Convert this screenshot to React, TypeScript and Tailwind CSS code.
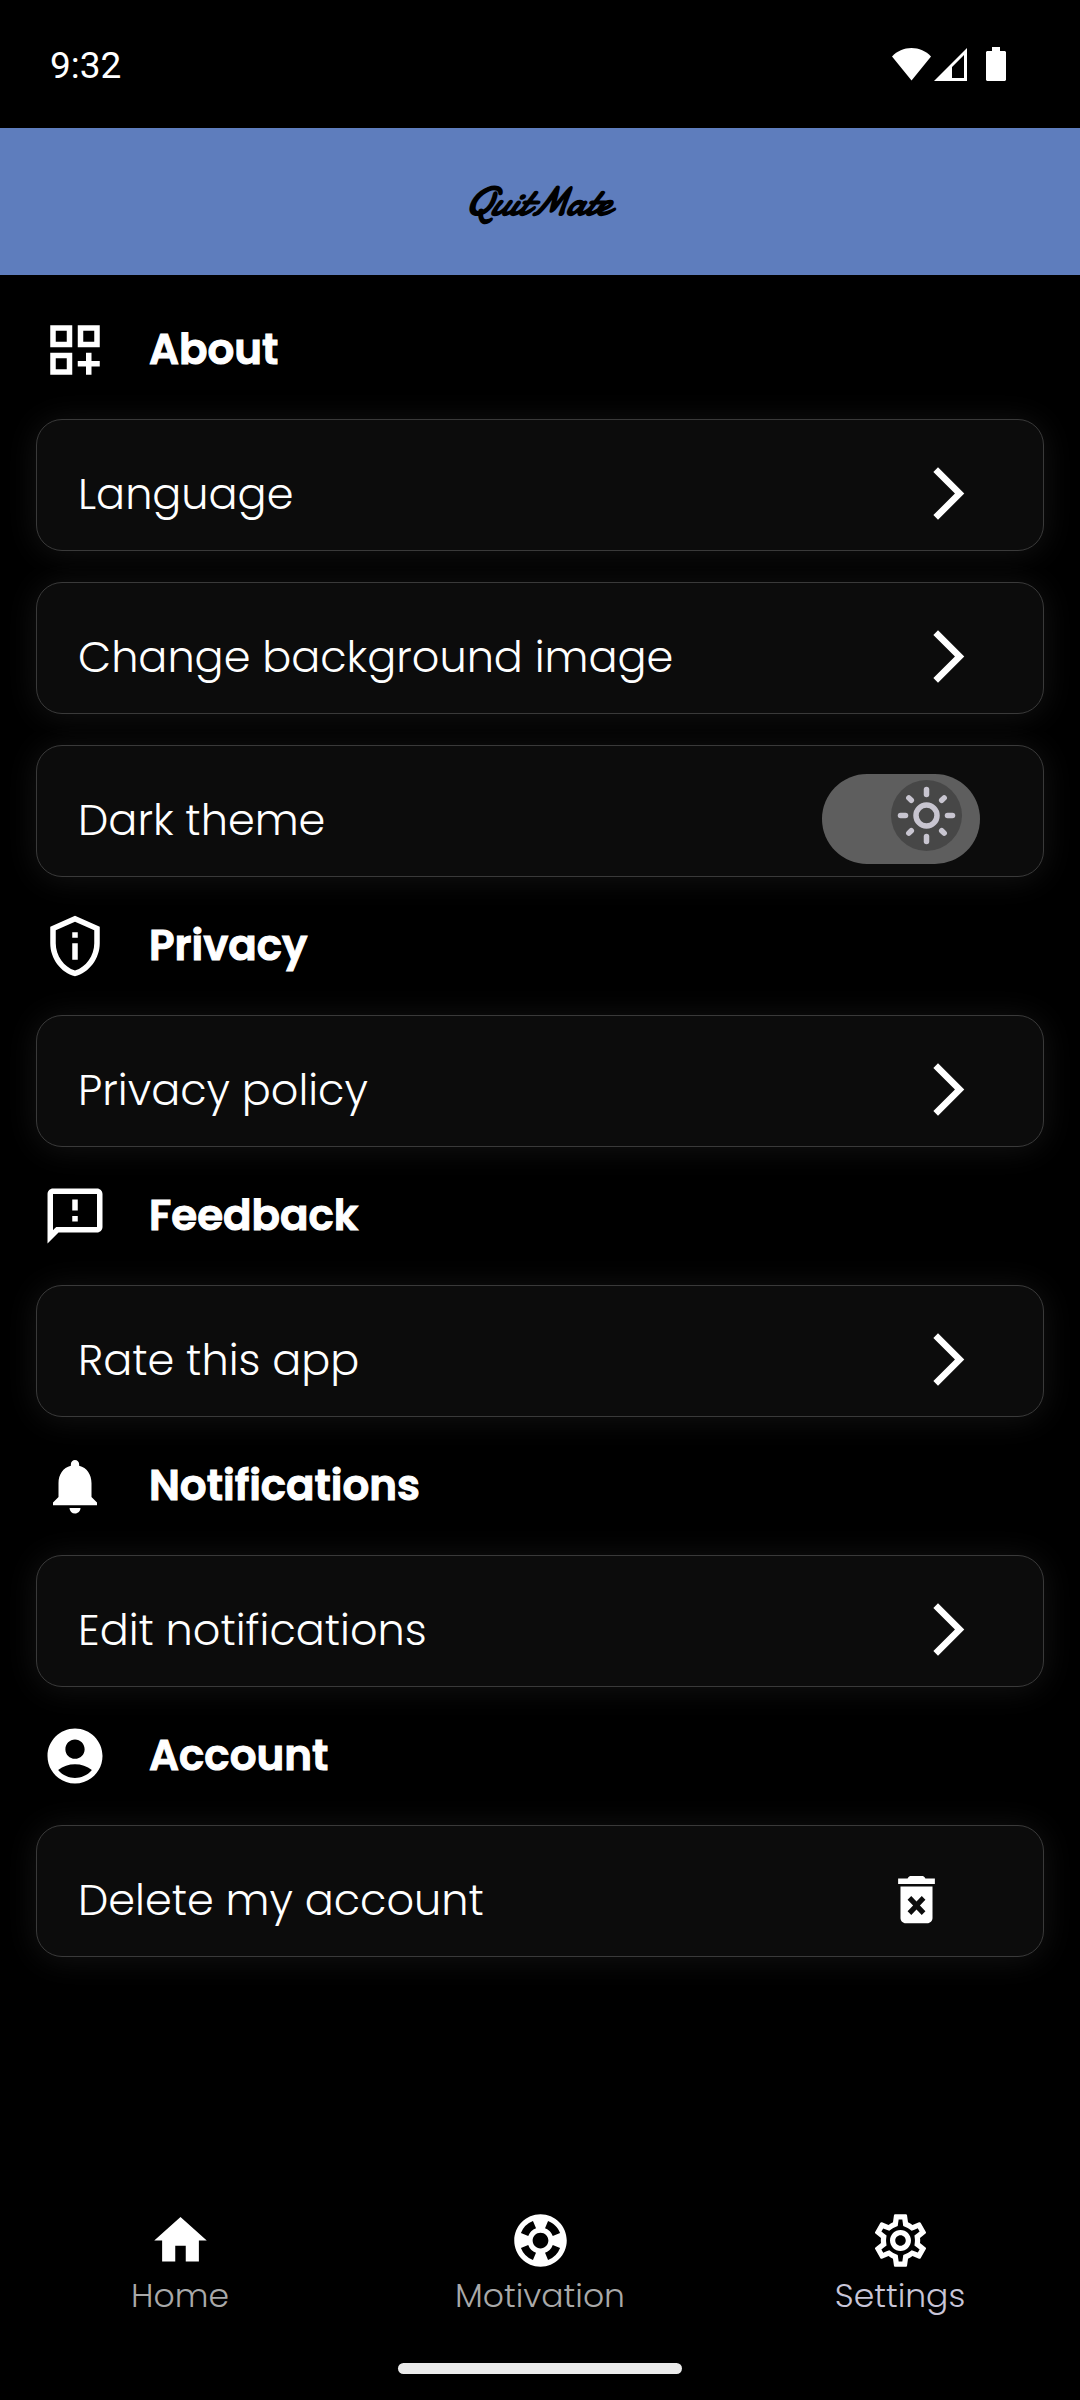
import React, { useState } from 'react';
import {
  MdAccountCircle,
  MdArrowForwardIos,
  MdHome,
  MdNotifications,
  MdOutlineDashboardCustomize,
  MdOutlineFeedback,
  MdOutlinePrivacyTip,
  MdOutlineSettings,
  MdSupport,
} from 'react-icons/md';

const StatusBar: React.FC = () => (
  <div className="flex h-32 items-center justify-between pl-[50px] pr-[74px] font-['Roboto',sans-serif] text-[37px] leading-[44px]">
    <span className="pt-1">9:32</span>
    <div className="flex items-center">
      <svg className="h-[34px] w-[39px]" viewBox="0 0 39 34" fill="currentColor" aria-hidden="true">
        <path d="M19.500 33.500L0 9.500C5 4 12 1 19.500 1S34 4 39 9.500z" />
      </svg>
      <svg className="ml-[3px] h-[34px] w-[33px]" viewBox="0 0 33 34" fill="currentColor" aria-hidden="true">
        <path fillRule="evenodd" d="M0 34L33 1v33zM18 20v11h12V8z" />
      </svg>
      <svg className="ml-[19px] h-[34px] w-5" viewBox="0 0 20 34" fill="currentColor" aria-hidden="true">
        <path d="M6 0h8v4h5l1 1v28l-1 1H1l-1-1V5l1-1h5z" />
      </svg>
    </div>
  </div>
);

const DeleteIcon: React.FC = () => (
  <svg className="mr-8 size-[63px]" viewBox="0 0 24 24" fill="currentColor" aria-hidden="true">
    <path d="M5 4h3.600C9 3.200 9.400 3 10 3h4c.6 0 1 .2 1.400 1H19v2.100H5z" />
    <path
      fillRule="evenodd"
      d="M5.900 7h12.200V19c0 1.100-.9 2-2 2H7.900c-1.100 0-2-.9-2-2zM10 10.700l-1.400 1.400 2.100 2.200-2.100 2.200 1.400 1.400 2-2.100 2 2.100 1.400-1.400-2.100-2.200 2.100-2.200-1.400-1.400-2 2.100z"
    />
  </svg>
);

const SunIcon: React.FC = () => (
  <svg className="size-[71px]" viewBox="-35.500 -35.500 71 71" fill="none" stroke="#c8c5d0" strokeWidth="5.500" strokeLinecap="round" aria-hidden="true">
    <circle r="10.500" />
    {[0, 90, 180, 270].map((angle) => (
      <path key={angle} d="M0-21V-26" transform={`rotate(${angle})`} />
    ))}
    {[45, 135, 225, 315].map((angle) => (
      <path key={angle} d="M0-21.500V-25" transform={`rotate(${angle})`} />
    ))}
  </svg>
);

const Section: React.FC<{ title: string; icon: React.ReactNode; children: React.ReactNode }> = ({ title, icon, children }) => (
  <section>
    <div className="flex h-[138px] items-center gap-[41px] pl-1.5 text-[66px]">
      {icon}
      <h2 className="text-[42px] leading-[56px] font-semibold [-webkit-text-stroke:1px]">{title}</h2>
    </div>
    <div className="flex flex-col gap-[31px]">{children}</div>
  </section>
);

const cardClass =
  'flex h-[132px] w-full items-center justify-between rounded-[26px] border border-[#3a3a3a] bg-[#0c0c0c] pt-4 pr-[63px] pl-[41px] text-left text-[43px] leading-[56px] font-light shadow-[0_2px_32px_rgba(255,255,255,0.08)]';

const SettingRow: React.FC<{ label: string; icon?: React.ReactNode }> = ({ label, icon }) => (
  <button type="button" className={cardClass}>
    <span className="pt-0.5">{label}</span>
    {icon ?? <MdArrowForwardIos className="size-[63px]" />}
  </button>
);

const App: React.FC = () => {
  const [darkTheme, setDarkTheme] = useState(true);

  return (
    <div className="flex min-h-screen flex-col bg-black font-['Poppins','Inter',sans-serif] text-white">
      <StatusBar />

      <header className="flex h-[147px] items-center justify-center bg-[#5e7dbd]">
        <h1 className="pr-1.5 font-['Damion','Lato',sans-serif] text-[41px] leading-[48px] font-bold text-black italic">QuitMate</h1>
      </header>

      <main className="flex-1 px-9 pt-1.5">
        <Section title="About" icon={<MdOutlineDashboardCustomize />}>
          <SettingRow label="Language" />
          <SettingRow label="Change background image" />
          <div className={cardClass}>
            <label htmlFor="dark-theme" className="pt-0.5">
              Dark theme
            </label>
            <div className="relative h-[90px] w-[158px]">
              <input
                id="dark-theme"
                type="checkbox"
                role="switch"
                checked={darkTheme}
                onChange={(e) => setDarkTheme(e.target.checked)}
                className="block h-full w-full cursor-pointer appearance-none rounded-full bg-[#5e5e5e]"
              />
              <span
                className={`pointer-events-none absolute top-[6px] rounded-full bg-[#474747] ${darkTheme ? 'right-[18px]' : 'left-[18px]'}`}
              >
                <SunIcon />
              </span>
            </div>
          </div>
        </Section>

        <Section title="Privacy" icon={<MdOutlinePrivacyTip />}>
          <SettingRow label="Privacy policy" />
        </Section>

        <Section title="Feedback" icon={<MdOutlineFeedback />}>
          <SettingRow label="Rate this app" />
        </Section>

        <Section title="Notifications" icon={<MdNotifications />}>
          <SettingRow label="Edit notifications" />
        </Section>

        <Section title="Account" icon={<MdAccountCircle />}>
          <SettingRow label="Delete my account" icon={<DeleteIcon />} />
        </Section>
      </main>

      {/* Bottom navigation */}
      <nav className="grid grid-cols-3 text-[33px] leading-10 font-light text-[#a9a9a9]">
        <a href="#home" className="flex flex-col items-center gap-1">
          <MdHome className="size-[63px] text-white" />
          Home
        </a>
        <a href="#motivation" className="flex flex-col items-center gap-1">
          <MdSupport className="size-[63px] text-white" />
          Motivation
        </a>
        <a href="#settings" aria-current="page" className="flex flex-col items-center gap-1 text-[#c8c5d8]">
          <MdOutlineSettings className="size-[63px] text-white" />
          Settings
        </a>
      </nav>

      <div className="flex justify-center pt-[47px] pb-[26px]">
        <div className="h-[11px] w-[284px] rounded-full bg-[#ebebeb]" />
      </div>
    </div>
  );
};

export default App;
